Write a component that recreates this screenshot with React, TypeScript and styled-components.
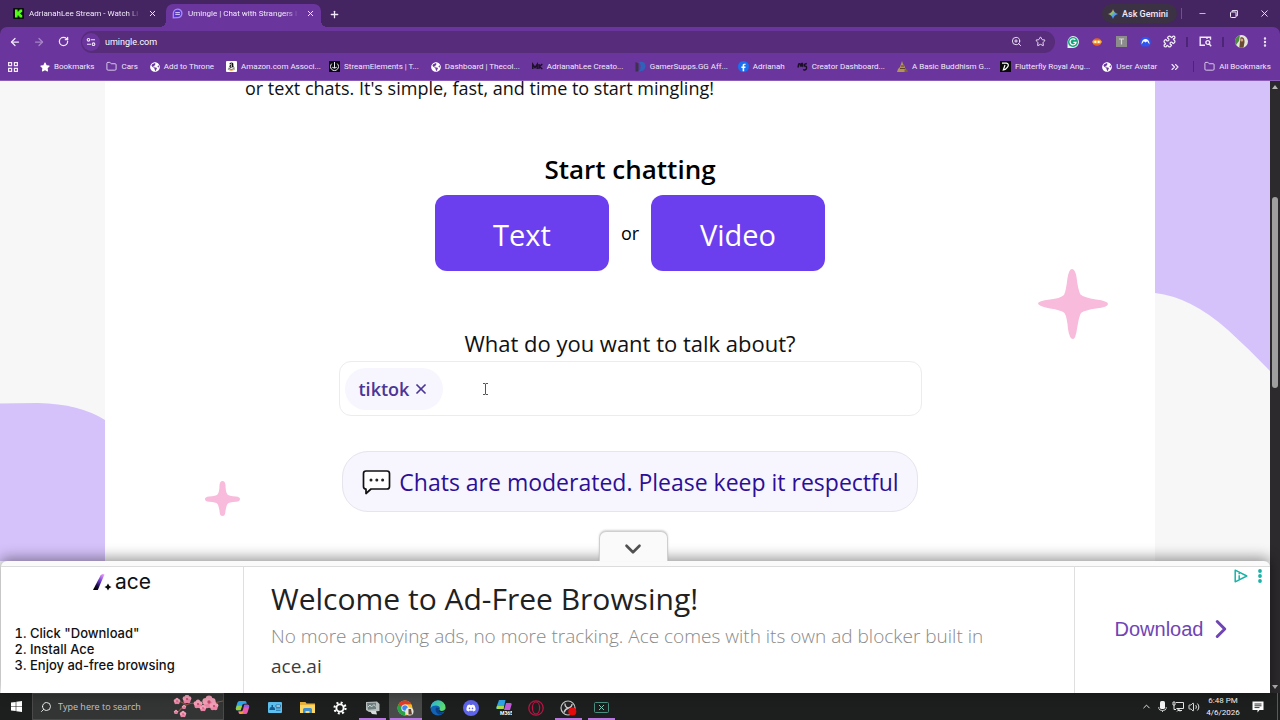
import React from "react";
import styled, { createGlobalStyle } from "styled-components";
import {
  ArrowLeft, ArrowRight, RotateCw, Star, Folder, Puzzle, ZoomIn, ChevronDown, ChevronRight,
  ChevronUp, ChevronsRight, X, Plus, Minus, Search, EllipsisVertical, Volume2,
} from "lucide-react";
import { FaAmazon, FaDiscord, FaFacebookF, FaStar, FaGlobeAmericas } from "react-icons/fa";

const ui = `"Open Sans", "Noto Sans", sans-serif`;
const chrome = `Roboto, "Open Sans", sans-serif`;
const color = {
  strip: "#452462",
  bar: "#6a359c",
  omni: "#572c7a",
  ink: "#f1e9fa",
  brand: "#6b3fee",
  lilac: "#d5c2fa",
  pink: "#f8bbdb",
  mist: "#f7f6fe",
};

const GlobalStyle = createGlobalStyle`
  * { box-sizing: border-box; }
  body { margin: 0; font-family: ${ui}; background: #fff; }
  button { font: inherit; color: inherit; background: none; border: 0; padding: 0; cursor: pointer; }
  a { color: inherit; text-decoration: none; }
  svg { display: block; flex: none; }
  h1, h2, p, ol { margin: 0; }
`;

const Shell = styled.div`
  display: flex;
  flex-direction: column;
  min-height: 100vh;
`;

/* Browser chrome */
const Chrome = styled.header`
  background: ${color.strip};
  color: ${color.ink};
  font-family: ${chrome};
  font-size: 8px;
  line-height: 12px;
`;
const TabStrip = styled.div`
  display: flex;
  align-items: flex-end;
  height: 27px;
  padding-left: 5px;
`;
const Tab = styled.div<{ $active?: boolean }>`
  position: relative;
  display: flex;
  align-items: center;
  gap: 5px;
  width: ${(p) => (p.$active ? 155 : 161)}px;
  height: 23px;
  padding: 0 ${(p) => (p.$active ? 5 : 8)}px 4px ${(p) => (p.$active ? 6 : 8)}px;
  border-radius: 7px 7px 0 0;
  background: ${(p) => (p.$active ? color.bar : "transparent")};
  &::before, &::after {
    content: "";
    display: ${(p) => (p.$active ? "block" : "none")};
    position: absolute;
    bottom: 0;
    width: 6px;
    height: 6px;
  }
  &::before { left: -6px; background: radial-gradient(circle at 0 0, transparent 6px, ${color.bar} 6px); }
  &::after { right: -6px; background: radial-gradient(circle at 100% 0, transparent 6px, ${color.bar} 6px); }
`;
const TabTitle = styled.span`
  flex: 1;
  min-width: 0;
  overflow: hidden;
  white-space: nowrap;
  mask-image: linear-gradient(90deg, #000 88%, transparent);
`;
const TabButton = styled.button`
  display: flex;
  align-items: center;
  justify-content: center;
  width: 12px;
  height: 12px;
`;
const NewTab = styled(TabButton)`
  margin: 0 auto 7px 7px;
`;
const Gemini = styled.button`
  display: flex;
  align-items: center;
  gap: 4px;
  height: 19px;
  margin: 0 4px 4px 0;
  padding: 0 9px 0 6px;
  border-radius: 10px;
  background: #3b3243;
  font-size: 9px;
  font-weight: 500;
`;
const WindowButtons = styled.div`
  display: flex;
  align-items: center;
  height: 11px;
  margin-bottom: 8px;
  border-left: 1px solid #7a45ae;
  padding-left: 5px;
`;
const WindowButton = styled(TabButton)`
  width: 31px;
`;
const Toolbar = styled.div`
  display: flex;
  align-items: center;
  height: 29px;
  padding: 0 3px;
  border-radius: 7px 7px 0 0;
  background: ${color.bar};
`;
const ToolButton = styled.button<{ $dim?: boolean }>`
  display: flex;
  align-items: center;
  justify-content: center;
  width: 24px;
  height: 22px;
  opacity: ${(p) => (p.$dim ? 0.45 : 1)};
`;
const Omnibox = styled.div`
  display: flex;
  flex: 1;
  align-items: center;
  height: 22px;
  margin: 0 6px;
  padding: 0 3px 0 1px;
  border-radius: 11px;
  background: ${color.omni};
`;
const SiteInfo = styled.button`
  display: flex;
  align-items: center;
  justify-content: center;
  width: 18px;
  height: 18px;
  border-radius: 9px;
  background: ${color.bar};
`;
const Address = styled.input`
  flex: 1;
  min-width: 0;
  padding: 0 5px;
  border: 0;
  outline: 0;
  background: none;
  color: #fff;
  font: 9px/14px ${chrome};
`;
const ToolRule = styled.span`
  width: 2px;
  height: 10px;
  margin: 0 5px;
  background: #4d2577;
`;
const BookmarkBar = styled.nav`
  display: flex;
  align-items: center;
  gap: 12px;
  height: 25px;
  padding: 0 10px 3px 8px;
  background: ${color.bar};
  border-bottom: 1px solid #8b5db8;
`;
const BookmarkRule = styled.span`
  width: 1px;
  height: 11px;
  margin-right: -2px;
  background: #4d2577;
`;
const Bookmark = styled.a<{ $wide?: boolean }>`
  display: flex;
  align-items: center;
  gap: 4px;
  width: ${(p) => (p.$wide ? "91px" : "auto")};
  white-space: nowrap;
`;
const BookmarkEnd = styled.div`
  display: flex;
  align-items: center;
  gap: 12px;
  margin-left: auto;
`;

/* Web page */
const Viewport = styled.div`
  display: flex;
  flex: 1;
`;
const PageColumn = styled.div`
  display: flex;
  flex: 1;
  flex-direction: column;
  min-width: 0;
`;
const Page = styled.div`
  display: grid;
  flex: 1;
  grid-template-columns: 105px minmax(0, 1fr) 115px;
  overflow: hidden;
  background: #f7f7f8;
`;
const Blob = styled.svg`
  width: 100%;
  height: 100%;
  fill: ${color.lilac};
`;
const Panel = styled.main`
  position: relative;
  display: flex;
  flex-direction: column;
  align-items: center;
  padding: 0 24px 48px;
  background: #fff;
`;
const Intro = styled.p`
  width: 100%;
  max-width: 770px;
  margin-bottom: 56px;
  font-size: 18px;
  line-height: 14px;
  color: #111;
`;
const StartTitle = styled.h1`
  margin-bottom: 8px;
  font-size: 26px;
  font-weight: 600;
  line-height: 36px;
  color: #000;
`;
const StartRow = styled.div`
  display: flex;
  align-items: center;
  justify-content: center;
  margin-bottom: 54px;
  font-size: 18px;
`;
const Or = styled.span`
  width: 42px;
  text-align: center;
`;
const StartButton = styled.button`
  width: 174px;
  height: 76px;
  padding-top: 2px;
  border-radius: 12px;
  background: ${color.brand};
  color: #fff;
  font-size: 29px;
`;
const TopicLabel = styled.label`
  font-size: 22px;
  line-height: 36px;
  color: #111;
`;
const TopicField = styled.div`
  position: relative;
  display: flex;
  align-items: center;
  width: 100%;
  max-width: 583px;
  height: 55px;
  margin-bottom: 35px;
  padding: 5px;
  border: 1px solid #ececee;
  border-radius: 12px;
`;
const Chip = styled.button`
  display: flex;
  align-items: center;
  gap: 4px;
  height: 42px;
  padding: 0 14px;
  border-radius: 21px;
  background: ${color.mist};
  color: #4b3596;
  font-size: 18px;
  font-weight: 600;
`;
const TopicInput = styled.input`
  flex: 1;
  min-width: 0;
  height: 42px;
  border: 0;
  outline: 0;
  background: none;
  font: 18px ${ui};
`;
const Pointer = styled.svg`
  position: absolute;
  left: 142px;
  top: 21px;
`;
const Notice = styled.p`
  display: flex;
  align-items: center;
  gap: 8px;
  height: 61px;
  padding: 0 18px 0 19px;
  border: 1px solid #e6e4ec;
  border-radius: 26px;
  background: ${color.mist};
  color: #2c0f96;
  font-size: 23px;
  white-space: nowrap;
`;
const Sparkle = styled.svg<{ $side: "left" | "right" }>`
  position: absolute;
  fill: ${color.pink};
  ${(p) => (p.$side === "left" ? "left: 100px; top: 400px;" : "right: 47px; top: 188px;")}
`;

/* Anchored advert */
const Advert = styled.aside`
  position: relative;
  display: grid;
  grid-template-columns: 243px minmax(0, 1fr) 196px;
  height: 132px;
  margin-left: 1px;
  padding-top: 5px;
  border-radius: 6px 6px 0 0;
  background: #fafafa;
  box-shadow: 0 -2px 14px 1px rgba(0, 0, 0, 0.42);
`;
const Collapse = styled.button`
  position: absolute;
  left: 50%;
  bottom: 100%;
  display: flex;
  align-items: center;
  justify-content: center;
  width: 69px;
  height: 30px;
  margin-left: -37px;
  padding-top: 4px;
  border: 1px solid #cfcfcf;
  border-bottom: 0;
  border-radius: 7px 7px 0 0;
  background: #fafafa;
  color: #505050;
  box-shadow: 0 -1px 2px rgba(0, 0, 0, 0.18);
`;
const AdCell = styled.div`
  display: flex;
  flex-direction: column;
  min-width: 0;
  background: #fff;
  border-top: 1px solid #dcdcdc;
`;
const AdSteps = styled(AdCell)`
  border-right: 1px solid #dfdfdf;
`;
const AdLogo = styled.div`
  display: flex;
  align-items: center;
  justify-content: center;
  gap: 3px;
  height: 30px;
  font: 21px/30px Inter, sans-serif;
  color: #111;
`;
const Steps = styled.ol`
  margin-top: 28px;
  padding-left: 29px;
  font: 500 13px/16px Inter, sans-serif;
  color: #111;
`;
const AdCopy = styled(AdCell)`
  padding: 12px 27px 0;
`;
const AdTitle = styled.h2`
  font-size: 30px;
  font-weight: 400;
  line-height: 40px;
  color: #212121;
`;
const AdText = styled.p`
  font-size: 19px;
  font-weight: 300;
  line-height: 34px;
  color: #8a8a8a;
  white-space: nowrap;
`;
const AdHost = styled.p`
  font-size: 19px;
  line-height: 26px;
  color: #3c3c3c;
`;
const AdAction = styled(AdCell)`
  border-left: 1px solid #dfdfdf;
`;
const AdTools = styled.div`
  display: flex;
  align-items: center;
  justify-content: flex-end;
  gap: 10px;
  height: 18px;
  padding-right: 8px;
`;
const Download = styled.a`
  display: flex;
  align-items: center;
  justify-content: center;
  gap: 3px;
  height: 88px;
  padding-left: 6px;
  font: 20px/24px "Liberation Sans", Arial, sans-serif;
  color: #6f45b5;
`;

/* Scroll bar */
const Scrollbar = styled.div`
  display: flex;
  flex-direction: column;
  align-items: center;
  width: 10px;
  padding: 4px 0;
  background: #2c2a2c;
`;
const ScrollTrack = styled.div`
  flex: 1;
  width: 6px;
`;
const ScrollThumb = styled.div`
  height: 32%;
  width: 6px;
  margin-top: 108px;
  border-radius: 3px;
  background: #a09fa0;
`;

/* Desktop task bar */
const Taskbar = styled.footer`
  display: flex;
  align-items: center;
  height: 27px;
  background: #1d1f1f;
  color: #f4f4f4;
`;
const StartMenu = styled.button`
  display: flex;
  align-items: center;
  justify-content: center;
  width: 32px;
  height: 27px;
`;
const SearchBox = styled.label`
  display: flex;
  align-items: center;
  gap: 6px;
  width: 192px;
  height: 27px;
  padding-left: 7px;
  border: 1px solid #4a4a4a;
  background: #333434;
`;
const SearchInput = styled.input`
  flex: 1;
  min-width: 0;
  padding: 0;
  border: 0;
  outline: 0;
  background: none;
  font: 9px/14px ${ui};
  color: #fff;
  &::placeholder { color: #c4c4c4; opacity: 1; }
`;
const Apps = styled.div`
  display: grid;
  grid-template-columns: repeat(12, 1fr);
  width: 392px;
  margin: 0 auto 0 2px;
`;
const AppButton = styled.button<{ $open?: boolean; $active?: boolean }>`
  display: flex;
  align-items: center;
  justify-content: center;
  height: 27px;
  padding-top: 2px;
  background:
    linear-gradient(${(p) => (p.$open || p.$active ? "#b877dd, #b877dd" : "transparent, transparent")})
    center bottom / ${(p) => (p.$active ? "32px" : "27px")} 2px no-repeat
    ${(p) => (p.$active ? "#484a4a" : "transparent")};
`;
const Tray = styled.div`
  display: flex;
  align-items: center;
  height: 27px;
`;
const TrayButton = styled.button`
  display: flex;
  align-items: center;
  justify-content: center;
  width: 16px;
  height: 27px;
`;
const Clock = styled.time`
  width: 42px;
  margin-right: 6px;
  font: 8px/12px ${chrome};
  text-align: center;
`;
const Peek = styled.span`
  width: 3px;
  height: 27px;
  margin-left: 11px;
  border-left: 1px solid #5a5a5a;
`;

const KickIcon = () => (
  <svg width="11" height="11" viewBox="0 0 11 11">
    <rect width="11" height="11" rx="1" fill="#0b0f0b" />
    <path d="M2 1.500h2.600v2h1v-1h1v-1h2.600v2.600h-1v1h-1v.8h1v1h1v2.600H6.600v-1h-1v-1h-1v2H2z" fill="#53fc18" />
  </svg>
);
const UmingleIcon = () => (
  <svg width="11" height="11" viewBox="0 0 11 11" fill="none" stroke="#a78bfa" strokeWidth="1.300">
    <path d="M1.300 9.800V5.500a4.300 4.300 0 1 1 4.300 4.200z" fill="#5a36c9" />
    <path d="M3.300 4.600h4.600M3.300 6.400h4.600" stroke="#d9ccff" strokeWidth="1" />
  </svg>
);
const GeminiIcon = () => (
  <svg width="10" height="10" viewBox="0 0 10 10">
    <defs>
      <linearGradient id="gem" x1="0" y1="0" x2="1" y2="1">
        <stop offset=".2" stopColor="#f0655a" />
        <stop offset=".4" stopColor="#8bc36a" />
        <stop offset=".6" stopColor="#4f9cf5" />
        <stop offset="1" stopColor="#5a7df0" />
      </linearGradient>
    </defs>
    <path d="M5 0Q6 4 10 5 6 6 5 10 4 6 0 5 4 4 5 0z" fill="url(#gem)" />
  </svg>
);
const RestoreIcon = () => (
  <svg width="8" height="8" viewBox="0 0 8 8" fill="none" stroke="currentColor">
    <rect x=".5" y="2" width="5.500" height="5.500" rx=".8" />
    <path d="M2.200 1.800V.6h5.200v5.200H6.200" />
  </svg>
);
const TuneIcon = () => (
  <svg width="10" height="10" viewBox="0 0 10 10" fill="none" stroke="currentColor" strokeWidth="1.100">
    <circle cx="2.500" cy="2.800" r="1.300" />
    <path d="M5 2.800h4M1 7.200h4" />
    <circle cx="7.500" cy="7.200" r="1.300" />
  </svg>
);
const GrammarlyIcon = () => (
  <svg width="12" height="12" viewBox="0 0 12 12">
    <path d="M6 0a6 6 0 1 1 0 12H.500V6A6 6 0 0 1 6 0z" fill="#dff5ee" />
    <circle cx="6" cy="6" r="5" fill="#15a37c" />
    <path d="M8.300 3.900A3 3 0 1 0 9 6.400H6.400" fill="none" stroke="#fff" strokeWidth="1.300" />
  </svg>
);
const NinjaIcon = () => (
  <svg width="10" height="8" viewBox="0 0 10 8">
    <ellipse cx="5" cy="4" rx="4.300" ry="3.800" fill="#e9642a" />
    <rect x=".3" y="2.200" width="9.400" height="3.200" rx="1.600" fill="#f6b03a" />
    <circle cx="3.300" cy="3.900" r="1.100" fill="#fff" />
    <circle cx="6.700" cy="3.900" r="1.100" fill="#fff" />
  </svg>
);
const TIcon = () => (
  <svg width="11" height="11" viewBox="0 0 11 11">
    <rect width="11" height="11" fill="#8c8c8c" />
    <path d="M3 3h5M5.500 3v5.500" stroke="#d8d8d8" strokeWidth="1.200" />
  </svg>
);
const NordIcon = () => (
  <svg width="11" height="11" viewBox="0 0 11 11">
    <path d="M2.500 10.500A5.300 5.300 0 1 1 8.500 10.500z" fill="#2f55f0" />
    <path d="M1.500 8.500C1.500 1.200 9.500 1.200 9.500 8.500L7.200 5.200 5.500 6.600 3.800 5.200z" fill="#fff" />
  </svg>
);
const SideSearchIcon = () => (
  <svg width="13" height="11" viewBox="0 0 13 11" fill="none" stroke="currentColor" strokeWidth="1.400">
    <path d="M6 9.300H1.200V1.200h10.300v2.600M8 1.200v1.800" />
    <circle cx="8.800" cy="6.500" r="1.900" />
    <path d="M10.200 8l2 2.200" />
  </svg>
);
const AvatarIcon = () => (
  <svg width="13" height="13" viewBox="0 0 13 13">
    <circle cx="6.500" cy="6.500" r="6.500" fill="#e6e6dc" />
    <path d="M1 3a6.500 6.500 0 0 1 4-2.800L4 6 1 10A6.500 6.500 0 0 1 1 3z" fill="#4f8a45" />
    <path d="M5.500 2.600c3-1.200 4.200 1.600 4 5l-1 4.800a6 6 0 0 1-4.200 0z" fill="#6b4a32" />
    <circle cx="6.800" cy="5" r="1.500" fill="#d4a27f" />
  </svg>
);
const AppsIcon = () => (
  <svg width="10" height="10" viewBox="0 0 10 10" fill="none" stroke="currentColor" strokeWidth="1.200">
    <path d="M.6.6h3v3h-3zM6.400.6h3v3h-3zM.6 6.400h3v3h-3zM6.400 6.400h3v3h-3z" />
  </svg>
);
const FolderIcon = () => <Folder size={11} strokeWidth={1.8} />;
const GlobeIcon = () => <FaGlobeAmericas size={10} color="#fff" />;
const AmazonIcon = () => (
  <svg width="11" height="11" viewBox="0 0 11 11">
    <rect width="11" height="11" rx="1" fill="#fff" />
    <FaAmazon x={1.5} y={1} size={8} color="#111" />
    <path d="M1.800 8.300q3.500 2.200 7 0" fill="none" stroke="#f59a13" />
  </svg>
);
const StreamElementsIcon = () => (
  <svg width="11" height="11" viewBox="0 0 11 11" fill="none" stroke="#e9e9f5">
    <rect width="11" height="11" fill="#08080d" stroke="none" />
    <path d="M2.800 2.600a4 4 0 1 0 5.400 0M5.500 1v6M3.200 6.200q2.300 2 4.600 0" />
  </svg>
);
const MkIcon = () => (
  <svg width="11" height="11" viewBox="0 0 11 11" fill="none" stroke="#1e1029" strokeWidth="1.500">
    <path d="M.8 8V3.400L3 6.600l2.200-3.200V8M7 3v5M10.300 3.200L7.400 5.500 10.300 8" />
  </svg>
);
const GamerIcon = () => (
  <svg width="11" height="11" viewBox="0 0 11 11">
    <path d="M.5 1l3 1.500v8H.5z" fill="#3a3350" />
    <path d="M4 1q7-1 6.500 5Q9.500 10.500 3 10.500 8 7 4 1z" fill="#2f62b8" />
  </svg>
);
const FacebookIcon = () => (
  <svg width="11" height="11" viewBox="0 0 11 11">
    <circle cx="5.500" cy="5.500" r="5.500" fill="#1b6ff0" />
    <FaFacebookF x={1.5} y={2.5} size={8} color="#fff" />
  </svg>
);
const CreatorIcon = () => (
  <svg width="11" height="11" viewBox="0 0 11 11" fill="none" stroke="#1a0d26" strokeWidth="1.400">
    <path d="M1 6.500l.8-4M1.800 3q2-1.500 1.600 2.500Q5 .8 5.600 3L5 6M9.800 2.500q-3 .5-2.600 2.500 3-.5 2.200 2.800-1.500 2-3.200.7" />
  </svg>
);
const StupaIcon = () => (
  <svg width="11" height="11" viewBox="0 0 11 11">
    <path d="M5 0l1 3 1.500 2 1 3 2 3H0l1-3 2-2 1-3z" fill="#b4935a" />
    <path d="M4 5h3M3 7.500h5" stroke="#5e4322" />
    <path d="M7.500 8.500h3V11h-3z" fill="#7e6234" />
  </svg>
);
const FlutterflyIcon = () => (
  <svg width="11" height="11" viewBox="0 0 11 11" fill="none" stroke="#fff" strokeWidth="1.200">
    <rect width="11" height="11" fill="#0a0a0a" stroke="none" />
    <path d="M2 2.200h4.500Q9.600 3 7.500 6.200 6 8.500 3.300 9L5 4" />
  </svg>
);

const bookmarks: { label: string; icon: React.ReactNode; wide?: boolean }[] = [
  { label: "Bookmarks", icon: <FaStar size={10} color="#fff" /> },
  { label: "Cars", icon: <FolderIcon /> },
  { label: "Add to Throne", icon: <GlobeIcon /> },
  { label: "Amazon.com Associ...", icon: <AmazonIcon />, wide: true },
  { label: "StreamElements | T...", icon: <StreamElementsIcon />, wide: true },
  { label: "Dashboard | Thecol...", icon: <GlobeIcon />, wide: true },
  { label: "AdrianahLee Creato...", icon: <MkIcon />, wide: true },
  { label: "GamerSupps.GG Aff...", icon: <GamerIcon />, wide: true },
  { label: "Adrianah", icon: <FacebookIcon /> },
  { label: "Creator Dashboard...", icon: <CreatorIcon />, wide: true },
  { label: "A Basic Buddhism G...", icon: <StupaIcon />, wide: true },
  { label: "Flutterfly Royal Ang...", icon: <FlutterflyIcon />, wide: true },
  { label: "User Avatar", icon: <GlobeIcon /> },
];

const WindowsIcon = () => (
  <svg width="11" height="11" viewBox="0 0 11 11" fill="#fff">
    <path d="M0 1.600L4.700.9v4.300H0zM5.300.8L11 0v5.200H5.300zM0 5.800h4.700v4.300L0 9.400zM5.300 5.800H11V11l-5.700-.8z" />
  </svg>
);
const blossoms = [[4, 6, 3], [14, 4, 4], [11, 12, 2], [10, 19, 3], [3, 17, 2], [25, 9, 4], [36, 7, 6], [30, 13, 3], [41, 11, 4]];
const BlossomIcon = () => (
  <svg width="50" height="23" viewBox="0 0 50 23">
    <path d="M5 17Q12 8 22 8q14 2 28-2M14 10l-8-4" fill="none" stroke="#8a5546" strokeWidth="1.200" />
    {blossoms.map(([x, y, r]) => (
      <g key={`${x}-${y}`} transform={`translate(${x} ${y}) scale(${r / 4})`} fill="#f2a0b8">
        <circle cy="-2.200" r="2.200" />
        <circle cx="2.200" cy="-.5" r="2.200" />
        <circle cx="1.400" cy="2" r="2.200" fill="#ea86a6" />
        <circle cx="-1.400" cy="2" r="2.200" fill="#ea86a6" />
        <circle cx="-2.200" cy="-.5" r="2.200" />
        <circle r="1.100" fill="#c8456c" />
      </g>
    ))}
  </svg>
);
const CopilotIcon = () => (
  <svg width="15" height="15" viewBox="0 0 16 16">
    <path d="M5 1h5.500q1.300 0 1.700 1.500L12.500 4H9.500Q8 4 7.500 6L6 11H2.500Q.3 11 1 8l1.500-5Q3 1 5 1z" fill="#2fa8ea" />
    <path d="M2 6l-1 3q-.3 2 1.500 2H6l1.500-5z" fill="#9bcf3f" />
    <path d="M11 15H5.500q-1.300 0-1.700-1.500L3.500 12h3Q8 12 8.500 10L10 5h3.500q2.200 0 1.500 3l-1.500 5q-.5 2-2.500 2z" fill="#e85aa5" />
    <path d="M4 12.500h3.500q1.500-.5 2-2.500l-1 4-2 1H5.500q-1.300-.5-1.500-2.500z" fill="#f59a3c" />
    <path d="M10 5h3.500q2 .3 1.500 3H9.200z" fill="#9c5ce6" />
  </svg>
);
const CardIcon = () => (
  <svg width="14" height="11" viewBox="0 0 14 11">
    <rect width="14" height="11" rx="1" fill="#5cc0ef" />
    <path d="M1.500 7q0-2 2-2V3h1.500v2q2 0 2 2v1H1.500z" fill="#14598f" />
    <path d="M8 3h4.500v2H8zM8 6h4.500M8 8.300h4.500" fill="#e7f7ff" stroke="#14598f" strokeWidth=".7" />
  </svg>
);
const ExplorerIcon = () => (
  <svg width="15" height="13" viewBox="0 0 15 13">
    <path d="M0 1h5.500l1 1.500H15V12H0z" fill="#e9b23b" />
    <path d="M0 4h15v8H0z" fill="#fbd766" />
    <path d="M3 12V8.500Q3 7 4.500 7h6Q12 7 12 8.500V12h-2.500v-2h-4v2z" fill="#3f8fd0" />
  </svg>
);
const GearIcon = () => (
  <svg width="14" height="14" viewBox="0 0 14 14" fill="none" stroke="#fff">
    <circle cx="7" cy="7" r="3.600" strokeWidth="1.900" />
    <circle cx="7" cy="7" r="5.500" strokeWidth="2.200" strokeDasharray="2 2.320" />
  </svg>
);
const CpuIcon = () => (
  <svg width="15" height="14" viewBox="0 0 15 14">
    <path d="M1 1l11-.5L14.500 3v7L4 11 1 9z" fill="#b9c0c0" />
    <path d="M2 2l9-.3V8L3 8.700z" fill="#6f7f80" />
    <path d="M3 6l2-2 1.500 2L9 3.500l1.500 2" fill="none" stroke="#dce9e6" strokeWidth=".8" />
    <path d="M5 10h6l1 3.500-5-.5z" fill="#d8dcdc" />
  </svg>
);
const ChromeIcon = () => (
  <svg width="17" height="16" viewBox="0 0 17 16">
    <circle cx="8" cy="8" r="7.500" fill="#fbc116" />
    <path d="M8 8L1.500 4.200A7.500 7.500 0 0 0 8 15.500z" fill="#2aa148" />
    <path d="M1.500 4.200L4.500 9 8 4.200z" fill="#2aa148" />
    <path d="M1.500 4.200A7.500 7.500 0 0 1 14.500 4.200L8 4.500 4 6.500z" fill="#e33b2e" />
    <circle cx="8" cy="8" r="3.600" fill="#fff" />
    <circle cx="8" cy="8" r="2.800" fill="#4285f4" />
    <circle cx="12.500" cy="11.500" r="4" fill="#e9e6df" />
    <path d="M11.500 9h2.500l1 5.500h-3.500z" fill="#65452e" />
  </svg>
);
const EdgeIcon = () => (
  <svg width="16" height="16" viewBox="0 0 16 16">
    <defs>
      <linearGradient id="edgeTop" x1="0" y1="0" x2="1" y2=".3">
        <stop offset="0" stopColor="#26b4ea" />
        <stop offset="1" stopColor="#5ddc6c" />
      </linearGradient>
    </defs>
    <circle cx="8" cy="8" r="7.500" fill="#1163b5" />
    <path d="M.5 8A7.500 7.500 0 0 1 15.500 7.500Q15.500 11 12 11 9 11 9.800 9 10.500 6.500 7.500 5.700 3 5 .5 8z" fill="url(#edgeTop)" />
    <path d="M6 7.500Q4.500 12 9 14.500 12 15 14.200 12.300 10 13.500 8.800 11 8 9.500 9.300 8z" fill="#0b3f86" />
    <path d="M9.200 8.500Q8.500 11 12 11q2.300 0 3.400-2L14.600 11.800Q10 13 8.800 11z" fill="#1d1f1f" />
  </svg>
);
const DiscordIcon = () => (
  <svg width="16" height="16" viewBox="0 0 16 16">
    <circle cx="8" cy="8" r="8" fill="#5e65ea" />
    <FaDiscord x={3} y={3} size={10} color="#fff" />
  </svg>
);
const M365Icon = () => (
  <svg width="16" height="16" viewBox="0 0 16 16">
    <path d="M3 0h6.500L7.500 9H1q-1 0-.5-2z" fill="#30a6e8" />
    <path d="M1 6l-.5 2q0 1 1 1H7.500l.6-3z" fill="#a7d948" />
    <path d="M10 3h4.500q1.500 0 1 2l-1.500 5H8z" fill="#c35bd8" />
    <text x="4" y="15" fontSize="5" fontWeight="700" fontFamily="Roboto, sans-serif" fill="#fff">M365</text>
  </svg>
);
const OperaIcon = () => (
  <svg width="16" height="16" viewBox="0 0 16 16" fill="none" stroke="#c01345" strokeWidth="1.200">
    <circle cx="8" cy="8" r="7.200" />
    <ellipse cx="8" cy="8" rx="3.600" ry="6" />
  </svg>
);
const ObsIcon = () => (
  <svg width="17" height="16" viewBox="0 0 17 16">
    <circle cx="8" cy="8" r="7" fill="#242426" stroke="#c6c6c6" strokeWidth="1.200" />
    <path d="M5 3.500q0 4 3.500 4.500Q12 7 12 4M8.500 8Q5 9 4 12.500" fill="none" stroke="#c6c6c6" strokeWidth="1.400" />
    <circle cx="12.300" cy="11.500" r="4" fill="#e30b0b" />
  </svg>
);
const MonitorIcon = () => (
  <svg width="15" height="11" viewBox="0 0 15 11" fill="none" stroke="#4b8f80">
    <rect x=".5" y=".5" width="14" height="10" rx="1" />
    <path d="M5 3l5 5M10 3L5 8" stroke="#7fc4b3" />
  </svg>
);
const taskApps: { name: string; icon: React.ReactNode; open?: boolean; active?: boolean }[] = [
  { name: "Copilot", icon: <CopilotIcon /> },
  { name: "Contacts", icon: <CardIcon /> },
  { name: "File Explorer", icon: <ExplorerIcon /> },
  { name: "Settings", icon: <GearIcon /> },
  { name: "System monitor", icon: <CpuIcon />, open: true },
  { name: "Chrome", icon: <ChromeIcon />, active: true },
  { name: "Edge", icon: <EdgeIcon /> },
  { name: "Discord", icon: <DiscordIcon /> },
  { name: "Microsoft 365", icon: <M365Icon /> },
  { name: "Opera", icon: <OperaIcon /> },
  { name: "OBS Studio", icon: <ObsIcon />, open: true },
  { name: "Display", icon: <MonitorIcon />, open: true },
];

const MicIcon = () => (
  <svg width="9" height="12" viewBox="0 0 9 12" fill="#f4f4f4">
    <rect x="2" y="0" width="5" height="8" rx="1.500" />
    <path d="M.8 6v1.500Q1 9.500 4.500 9.500T8.200 7.500V6M4.500 9.500V11" fill="none" stroke="#c8c8c8" />
  </svg>
);
const NetworkIcon = () => (
  <svg width="12" height="11" viewBox="0 0 12 11" fill="none" stroke="#e6e6e6">
    <path d="M4 1.500h7.500v6H4.500M1 1h2v3H1zM2 4v4.500h2M6 9.500h4M5 7.500l3 3M8 7.500l-3 3" />
  </svg>
);
const ActionIcon = () => (
  <svg width="12" height="12" viewBox="0 0 12 12">
    <path d="M.5.500h11v8.500H7.500L5.500 11.500V9h-5z" fill="#fff" />
    <path d="M2.500 3h7M2.500 4.800h7M2.500 6.600h5" stroke="#1d1f1f" strokeWidth=".9" />
  </svg>
);
const ChatIcon = () => (
  <svg width="29" height="26" viewBox="0 0 29 26">
    <path d="M4 2h21q2.500 0 2.500 2.500v13q0 2.500-2.500 2.500H9l-5 4.500V20q-2.500 0-2.500-2.500v-13Q1.500 2 4 2z" fill="#fff" stroke="#111" strokeWidth="1.700" strokeLinejoin="round" />
    <circle cx="9" cy="11" r="1.500" fill="#222" />
    <circle cx="14.800" cy="11" r="1.500" fill="#222" />
    <circle cx="20.600" cy="11" r="1.500" fill="#222" />
  </svg>
);
const AceIcon = () => (
  <svg width="19" height="18" viewBox="0 0 19 18">
    <defs>
      <linearGradient id="ace" x1=".8" y1="0" x2=".2" y2="1">
        <stop offset="0" stopColor="#e59af5" />
        <stop offset=".4" stopColor="#6f3fd0" />
        <stop offset=".75" stopColor="#150a3c" />
        <stop offset="1" stopColor="#000" />
      </linearGradient>
    </defs>
    <path d="M0 17L7.500 2.500Q9 0 11.500 1.500L4.800 17z" fill="url(#ace)" />
    <path d="M15 10.500q.8 2.700 3.500 3.500-2.700.8-3.500 3.500-.8-2.700-3.500-3.500 2.700-.8 3.500-3.500z" fill="#0a0a0a" />
  </svg>
);
const AdChoicesIcon = () => (
  <svg width="14" height="14" viewBox="0 0 14 14" fill="none" stroke="#1bb2a6" strokeWidth="1.500">
    <path d="M1.200 1.200v11.600L12.800 7z" strokeLinejoin="round" />
    <path d="M5.200 6.200v4M5.200 4v1.200" />
  </svg>
);
const DotsIcon = () => (
  <svg width="4" height="14" viewBox="0 0 4 14" fill="#1bb2a6">
    <circle cx="2" cy="2" r="1.900" />
    <circle cx="2" cy="7" r="1.900" />
    <circle cx="2" cy="12" r="1.900" />
  </svg>
);

export default function App() {
  return (
    <Shell>
      <GlobalStyle />
      <Chrome>
        <TabStrip>
          <Tab>
            <KickIcon />
            <TabTitle>AdrianahLee Stream - Watch Li</TabTitle>
            <TabButton aria-label="Close tab"><X size={9} strokeWidth={2.6} /></TabButton>
          </Tab>
          <Tab $active>
            <UmingleIcon />
            <TabTitle>Umingle | Chat with Strangers I</TabTitle>
            <TabButton aria-label="Close tab"><X size={9} strokeWidth={2.6} /></TabButton>
          </Tab>
          <NewTab aria-label="New tab"><Plus size={11} strokeWidth={2.8} /></NewTab>
          <Gemini><GeminiIcon />Ask Gemini</Gemini>
          <WindowButtons>
            <WindowButton aria-label="Minimize"><Minus size={9} /></WindowButton>
            <WindowButton aria-label="Restore"><RestoreIcon /></WindowButton>
            <WindowButton aria-label="Close"><X size={11} /></WindowButton>
          </WindowButtons>
        </TabStrip>
        <Toolbar>
          <ToolButton aria-label="Back"><ArrowLeft size={12} strokeWidth={2.5} /></ToolButton>
          <ToolButton aria-label="Forward" $dim><ArrowRight size={12} strokeWidth={2.5} /></ToolButton>
          <ToolButton aria-label="Reload"><RotateCw size={11} strokeWidth={2.8} /></ToolButton>
          <Omnibox>
            <SiteInfo aria-label="Site information"><TuneIcon /></SiteInfo>
            <Address aria-label="Address" defaultValue="umingle.com" />
            <ToolButton aria-label="Zoom"><ZoomIn size={11} strokeWidth={2} /></ToolButton>
            <ToolButton aria-label="Bookmark this page"><Star size={11} strokeWidth={2} /></ToolButton>
          </Omnibox>
          <ToolButton aria-label="Grammarly"><GrammarlyIcon /></ToolButton>
          <ToolButton aria-label="Extension"><NinjaIcon /></ToolButton>
          <ToolButton aria-label="Text extension"><TIcon /></ToolButton>
          <ToolButton aria-label="VPN"><NordIcon /></ToolButton>
          <ToolButton aria-label="Extensions"><Puzzle size={13} strokeWidth={2.4} /></ToolButton>
          <ToolRule />
          <ToolButton aria-label="Side search"><SideSearchIcon /></ToolButton>
          <ToolRule />
          <ToolButton aria-label="Profile"><AvatarIcon /></ToolButton>
          <ToolButton aria-label="Menu"><EllipsisVertical size={12} strokeWidth={2.8} /></ToolButton>
        </Toolbar>
        <BookmarkBar>
          <AppsIcon />
          <BookmarkRule />
          {bookmarks.map((b) => (
            <Bookmark key={b.label} href="#" $wide={b.wide}>{b.icon}{b.label}</Bookmark>
          ))}
          <BookmarkEnd>
            <ChevronsRight size={12} strokeWidth={2.2} />
            <BookmarkRule />
            <Bookmark href="#"><FolderIcon />All Bookmarks</Bookmark>
          </BookmarkEnd>
        </BookmarkBar>
      </Chrome>

      <Viewport>
        <PageColumn>
          <Page>
            <Blob viewBox="0 0 105 480" preserveAspectRatio="none">
              <path d="M0 322.500Q14 322 38 322 80 323 105 339V480H0z" />
            </Blob>
            <Panel>
              <Sparkle $side="right" width="70" height="70" viewBox="0 0 70 70">
                <path d="M34 0Q37 0 38.500 8 40 21 42.500 25.500 46 28.500 58 30.500 70 32 70 35 70 38 58 39.500 47 41 43 44 41 47 39 60 37.500 70 35 70 31.500 70 30 60 29 48 26.500 44 23 41 12 39.500 0 37 0 34.500 0 32 12 30.500 22 29.500 26 26 28 22 29.500 9 31 0 34 0z" />
              </Sparkle>
              <Sparkle $side="left" width="35" height="35" viewBox="0 0 35 35">
                <path d="M17.500 0Q20 0 20.500 4 20.500 11 22.500 13.500 24 15 31 15.500 35 16 35 18 35 20.500 31 20.800 24 21 22.500 23 21 25 20.300 31.500 20 35 17.500 35 15 35 14.700 31.500 14 25 12.500 23 11 21 4 20.800 0 20.500 0 18 0 16 4 15.500 11 15 12.500 13.500 14.500 11 14.500 4 15 0 17.500 0z" />
              </Sparkle>
              <Intro>or text chats. It's simple, fast, and time to start mingling!</Intro>
              <StartTitle>Start chatting</StartTitle>
              <StartRow>
                <StartButton>Text</StartButton>
                <Or>or</Or>
                <StartButton>Video</StartButton>
              </StartRow>
              <TopicLabel htmlFor="topic">What do you want to talk about?</TopicLabel>
              <TopicField>
                <Chip>tiktok<X size={16} strokeWidth={2.6} /></Chip>
                <TopicInput id="topic" />
                <Pointer width="7" height="12" viewBox="0 0 7 12" fill="none" stroke="#555">
                  <path d="M1 .5h2l.5.5.5-.5h2M3.500 1v10M1 11.500h2l.5-.5.5.5h2" />
                </Pointer>
              </TopicField>
              <Notice><ChatIcon />Chats are moderated. Please keep it respectful</Notice>
            </Panel>
            <Blob viewBox="0 0 115 480" preserveAspectRatio="none">
              <path d="M0 0H115V290Q95 269 73 249 36 216 0 212z" />
            </Blob>
          </Page>
          <Advert>
            <Collapse aria-label="Hide advert"><ChevronDown size={26} strokeWidth={2.4} /></Collapse>
            <AdSteps>
              <AdLogo><AceIcon />ace</AdLogo>
              <Steps>
                <li>Click "Download"</li>
                <li>Install Ace</li>
                <li>Enjoy ad-free browsing</li>
              </Steps>
            </AdSteps>
            <AdCopy>
              <AdTitle>Welcome to Ad-Free Browsing!</AdTitle>
              <AdText>No more annoying ads, no more tracking. Ace comes with its own ad blocker built in</AdText>
              <AdHost>ace.ai</AdHost>
            </AdCopy>
            <AdAction>
              <AdTools><AdChoicesIcon /><DotsIcon /></AdTools>
              <Download href="#">Download<ChevronRight size={30} strokeWidth={2.4} /></Download>
            </AdAction>
          </Advert>
        </PageColumn>
        <Scrollbar>
          <svg width="6" height="4" viewBox="0 0 6 4" fill="#b5b5b5"><path d="M3 0l3 4H0z" /></svg>
          <ScrollTrack><ScrollThumb /></ScrollTrack>
          <svg width="6" height="4" viewBox="0 0 6 4" fill="#b5b5b5"><path d="M3 4l3-4H0z" /></svg>
        </Scrollbar>
      </Viewport>

      <Taskbar>
        <StartMenu aria-label="Start"><WindowsIcon /></StartMenu>
        <SearchBox>
          <Search size={12} strokeWidth={1.8} transform="scale(-1 1)" />
          <SearchInput aria-label="Search" placeholder="Type here to search" />
          <BlossomIcon />
        </SearchBox>
        <Apps>
          {taskApps.map((a) => (
            <AppButton key={a.name} aria-label={a.name} $open={a.open} $active={a.active}>{a.icon}</AppButton>
          ))}
        </Apps>
        <Tray>
          <TrayButton aria-label="Hidden icons"><ChevronUp size={11} /></TrayButton>
          <TrayButton aria-label="Microphone"><MicIcon /></TrayButton>
          <TrayButton aria-label="Network"><NetworkIcon /></TrayButton>
          <TrayButton aria-label="Volume"><Volume2 size={12} strokeWidth={1.8} /></TrayButton>
          <Clock>6:48 PM<br />4/6/2026</Clock>
          <TrayButton aria-label="Notifications"><ActionIcon /></TrayButton>
          <Peek />
        </Tray>
      </Taskbar>
    </Shell>
  );
}
